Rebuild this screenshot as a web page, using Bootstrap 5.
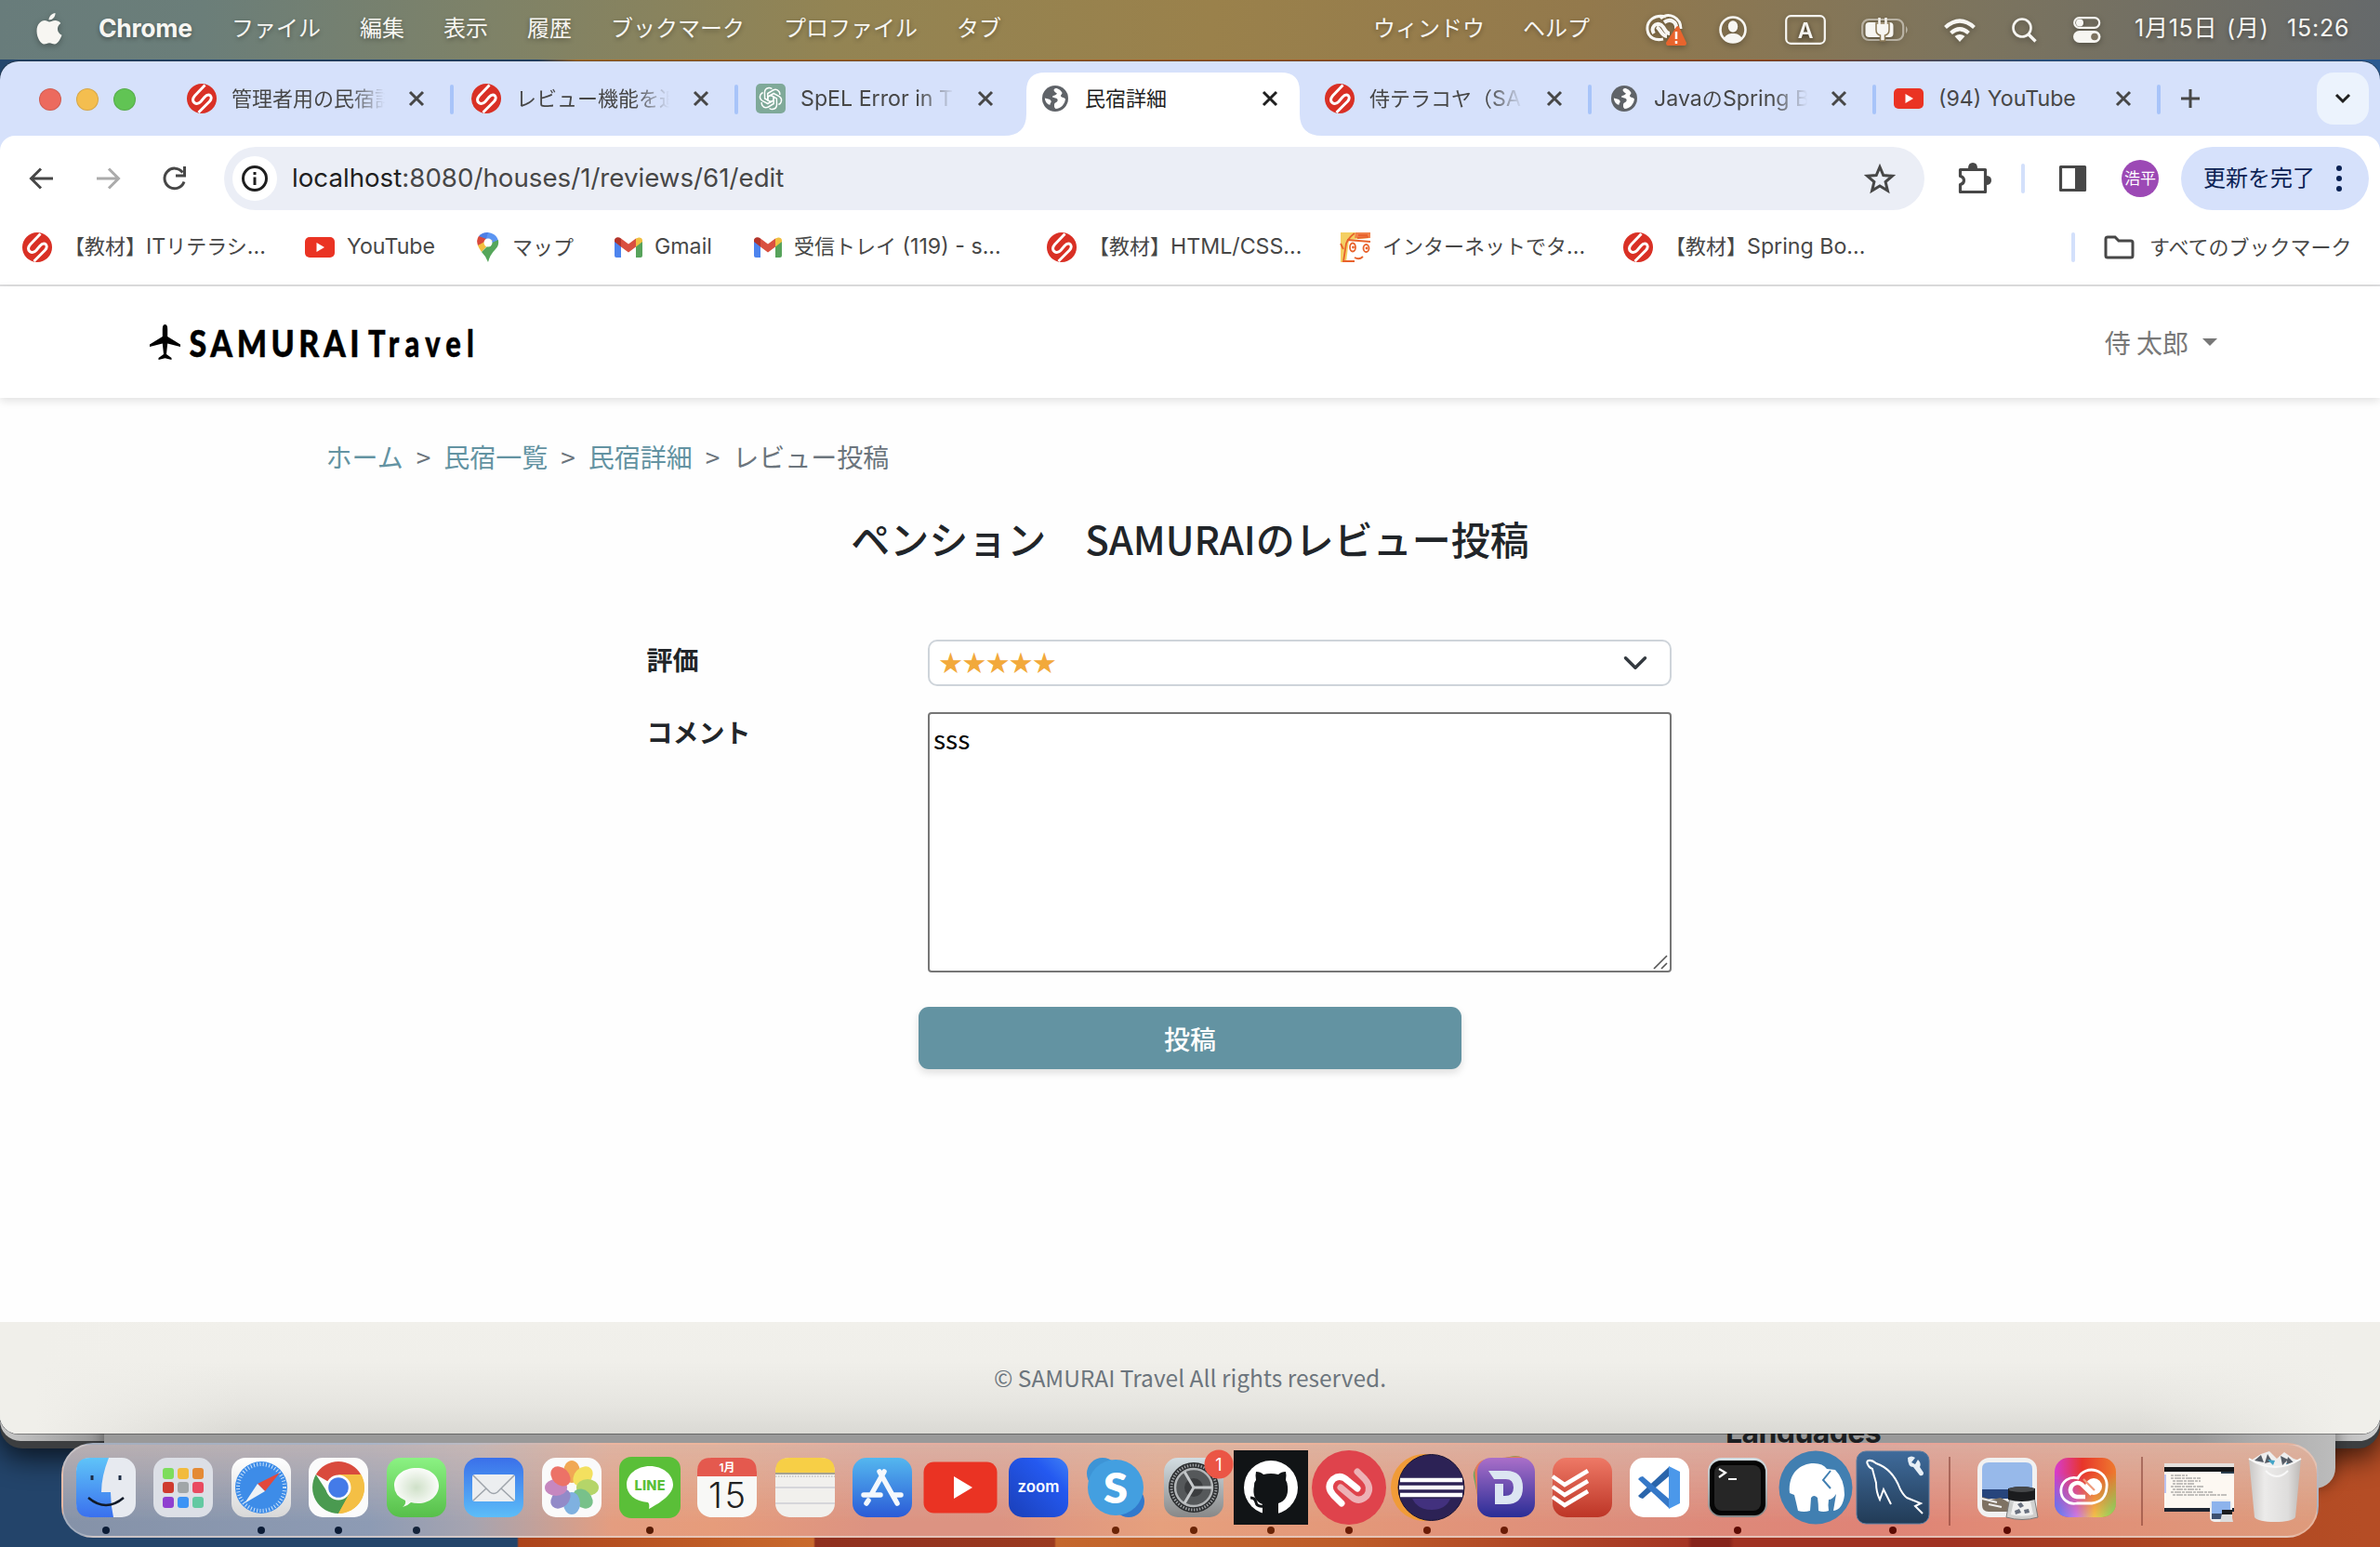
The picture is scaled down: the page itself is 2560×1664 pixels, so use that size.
<!DOCTYPE html>
<html lang="ja">
<head>
<meta charset="utf-8">
<title>民宿詳細</title>
<link href="https://cdn.jsdelivr.net/npm/bootstrap@5.3.0/dist/css/bootstrap.min.css" rel="stylesheet">
<style>
body{width:2560px;height:1664px;overflow:hidden;margin:0;font-family:Inter,"Noto Sans CJK JP",sans-serif;color:#474747;
 background:linear-gradient(90deg,#23466d 0 578px,#a86b25 620px,#9b4b20 1900px,#2a5a92 2200px) 0 0/2560px 120px no-repeat,
 linear-gradient(90deg,#23446a 0 556px,#ac431b 558px,#c96a2d 875px,#8f2f1e 877px,#9b3a20 1134px,#c4672d 1136px,#bd5c29 1450px,#a43524 1815px,#86241b 1820px 1860px,#a03222 1865px,#a03222 2100px,#ae4822 2350px,#b54d25 2540px);}
svg{display:block;overflow:visible}
.line-none{line-height:1;white-space:nowrap}
/* menu bar */
.menubar{height:64px;color:#f7f6f2;font-size:24px;line-height:1;padding-bottom:3px;text-shadow:0 2px 5px rgba(0,0,0,.35);
 background:linear-gradient(95deg,#687c7b 0,#6b7e79 220px,#7e8268 520px,#938453 900px,#9a814b 1300px,#93794c 1700px,#7c745e 2120px,#65696b 2560px)}
.menu-left{display:grid;grid-template-columns:106px 143px 138px 90px 90px 90px 186px 186px 448px 161px 90px;white-space:nowrap;align-items:center}
.menu-right{display:grid;grid-template-columns:79px 71px 82px 89px 73px 66px 66px 264px;white-space:nowrap;align-items:center}
.menu-left .app-name{font-weight:700;font-size:26.5px;letter-spacing:-.3px}
.menubar svg{filter:drop-shadow(0 2px 3px rgba(0,0,0,.3))}
.menu-right svg{margin-top:3px}
.clock-text{letter-spacing:.75px;font-size:25px;word-spacing:2px}
/* browser window */
.browser{margin-top:2px;height:1476px;border-radius:20px;background:#d6e1fb;overflow:hidden;box-shadow:0 0 0 1px rgba(30,30,30,.4)}
.tabstrip{height:80px;display:grid;grid-template-columns:180px repeat(7,306px) 170px 56px}
.lights{padding-left:42px;gap:16px;padding-top:2px}
.lights span{width:24px;height:24px;border-radius:50%;border:1px solid rgba(0,0,0,.12)}
.btab{padding:0 21px 4px 21px;font-size:22px;line-height:1;white-space:nowrap;position:relative;margin-top:4px}
.ltn{font-size:23.2px}
.btab>svg{flex:none;width:32px;height:32px}
.btab .ttl{width:167px;margin-left:16px;line-height:32px;overflow:hidden;-webkit-mask-image:linear-gradient(90deg,#000 76%,transparent 99%)}
.btab .ttl.whole{-webkit-mask-image:none}
.btab .cls{width:18px;height:18px;margin-left:23px}
.btab.divided::after{content:"";position:absolute;right:-2px;top:21px;width:4px;height:32px;border-radius:2px;background:#a8c4f9}
.btab.chosen{color:#1f1f1f}
.chosen-shape{position:absolute;left:-18px;top:8px;width:342px!important;height:68px!important}
.btab.chosen>*{position:relative}
.btab.chosen>.chosen-shape{position:absolute}
.tab-list{width:56px;height:56px;border-radius:18px;background:#ecf3fd;margin-top:12px}
.chrome-body{background:#fff;border-radius:16px 16px 0 0}
.toolbar2{height:92px;display:grid;grid-template-columns:241px 1829px 87px 42px 81px 66px 202px;align-items:center}
.toolbar2 .avatar-dot{margin-left:2px}
.nav-icons{display:grid;grid-template-columns:71px 73px 60px;padding-left:29px}
.omnibox{height:68px;border-radius:34px;background:#ebeef6;padding-left:9px;padding-right:31px}
.omni-info{width:48px;height:48px;border-radius:50%;background:#fff}
.addr{font-size:27.7px;line-height:1;margin-left:16px;color:#474747}
.addr b{font-weight:400;color:#1f1f1f}
.avatar-dot{width:40px;height:40px;border-radius:50%;background:#9c49b5;color:#fff;font-size:17px}
.update-btn{height:68px;border-radius:34px;background:#d6e1fb;color:#0b2254;font-size:24px;padding-left:24px;padding-right:29px}
.bmk-row{height:56px;padding-bottom:12px;border-bottom:2px solid #dfdfe0;box-sizing:content-box;display:grid;
 grid-template-columns:304px 184px 149px 150px 315px 316px 304px 506px 332px;font-size:22px}
.bmk{padding-left:24px;line-height:1;white-space:nowrap;gap:13px}
.bmk svg{flex:none}
/* site */
.site{font-family:"Noto Sans CJK JP",sans-serif;font-size:28px;background:#fefefe;color:#212529;height:1234px;line-height:1.5}
.site-nav{height:120px;padding:0 175px 0 160px;background:#fff;box-shadow:0 3px 9px rgba(0,0,0,.12);position:relative}
.site-user{color:#787878;gap:15px;line-height:1}
.site-user i{border-top:8px solid #777;border-left:8px solid transparent;border-right:8px solid transparent}
.site-main{height:994px;padding-top:42px}
.crumbs{margin:0 0 0 350.5px;--bs-breadcrumb-item-padding-x:14px;--bs-breadcrumb-divider-color:#6c757d;--bs-breadcrumb-item-active-color:#6c757d;font-size:28px;line-height:42px}
.crumbs a{color:#6393a2;text-decoration:none}
.site-title{font-size:42px;font-weight:500;line-height:50px;margin:42px 0 0;white-space:pre}
.form-area{margin:84px 762px 0 695.500px}
.form-area label{width:302.500px;font-weight:600;line-height:42px}
.rate-select{width:800px;height:50px;border:2px solid #ced4da;border-radius:10px;padding:0 60px 3px 10px;font-size:25.2px;line-height:43px;color:#f2a93b;background-size:28px 28px;background-position:right 23px center;font-family:"Noto Sans CJK JP",sans-serif}
.comment-box{width:800px;height:280px;border:2px solid #767676;border-radius:4px;padding:5px 4px;line-height:42px;resize:none;display:block;color:#000;background:#fff}
.grip{position:absolute;right:4px;bottom:3px}
.send-btn{width:584px;height:67px;border-radius:11px;background:#6393a2;color:#fff;border:0;font-size:28px;font-weight:500;line-height:69px;padding:0;margin:37px auto 0;display:block;box-shadow:0 4px 8px rgba(0,0,0,.13)}
.site-footer{height:120px;padding-top:1px;background:linear-gradient(180deg,#f1f0eb 0,#f0efea 35%,#e6e5e0 75%,#dad9d4);color:#6c757d;font-size:24.5px;line-height:1;position:relative}
.site-footer::before,.site-footer::after{content:"";position:absolute;top:0;bottom:0;width:260px}
.site-footer::before{left:0;background:linear-gradient(90deg,#f0efea 15%,rgba(240,239,234,0))}
.site-footer::after{right:0;background:linear-gradient(270deg,#f0efea 15%,rgba(240,239,234,0))}
/* windows stacked behind */
.behind{position:absolute;overflow:hidden;z-index:-1}
.behind-a{left:0;top:1480px;width:2560px;height:78px;background:#3c3e40;border-radius:0 0 24px 24px;box-shadow:0 10px 30px rgba(0,0,0,.7)}
.behind-b{left:0;top:1480px;width:2560px;height:70px;background:linear-gradient(90deg,#c9c9c9,#8f8f8f 120px,#999 2440px,#d0d0d0);border-radius:0 0 22px 22px}
.behind-c{left:112px;top:1480px;width:2400px;height:121px;background:linear-gradient(90deg,#999 0 2250px,#aaa 2310px,#bcbcbc);border-radius:0 0 22px 22px;box-shadow:0 0 16px rgba(0,0,0,.4)}
.behind-c strong{display:block;padding:41px 0 0 1744px;font-size:32px;line-height:40px;color:#1c1e21;letter-spacing:-.6px}
/* dock */
.dock{position:absolute;left:66px;top:1552px;width:2428px;height:102px;border-radius:34px;border:2px solid rgba(255,255,255,.25);
 display:grid;grid-template-columns:repeat(24,83.6px) 39px 84px 84px 38px 82px 84px;padding-left:3.500px;
 background:linear-gradient(180deg,rgba(218,194,184,.6),rgba(225,170,145,0) 85%),linear-gradient(90deg,#8592a8 0,#8d9bb4 330px,#a6a4b0 440px,#e49d80 590px,#e69c7b 700px,#dc9382 870px,#dc9382 1010px,#e6a07d 1180px,#e39779 1400px,#dd8c7b 1700px,#df8376 1950px,#e18d76 2120px,#de9b7c 2428px)}
.dock::before{content:"";position:absolute;inset:0;border-radius:32px;background:linear-gradient(90deg,rgba(165,180,205,.55),rgba(165,180,205,.4) 330px,transparent 480px);z-index:-1}
.dock svg{height:102px;width:84px;margin-top:-2px}
.dock .rule2{width:2px;height:74px;background:rgba(120,50,40,.5);margin:13px auto 0}
.ui text{font-family:Inter,"Noto Sans CJK JP",sans-serif}
</style>
<script src="https://cdn.jsdelivr.net/npm/bootstrap@5.3.0/dist/js/bootstrap.bundle.min.js"></script>
</head>
<body class="ui">
<svg width="0" height="0" class="position-absolute">
 <defs>
  <symbol id="sam" viewBox="0 0 32 32"><circle cx="16" cy="16" r="16" fill="#d93025"/><path d="M19.5 1.5 8.5 13Q4.800 17.500 8 20.500Q11.500 23 15 19.200L19 14.500Q22.500 10.500 25.300 12.800Q27.500 15.500 24.500 19L12.500 31" fill="none" stroke="#fff" stroke-width="2.900"/></symbol>
  <symbol id="globe" viewBox="0 0 32 32"><circle cx="16" cy="16" r="14" fill="#5f6368"/><path d="M16.500 5c-4 1-1 4.500 1.500 5.500-2 3-5 1.500-5 4 3 1 6.500 1 5.500 4-1 2-3.500 1.500-3.500 4.500-.3 2 .5 3 1.500 4 6-.5 9.800-5 10.500-10.500-1.500-2-3-1-4.500-2.500-1.500-1.300 1-2.500 1-4C22.500 7.500 19 4.800 16.500 5zM4.800 15.500c2.500 1 5.500.5 6.700 3 .8 2-1.500 2.500-1 4.500C7 22 5 19 4.800 15.500z" fill="#fff"/></symbol>
  <symbol id="yt" viewBox="0 0 32 32"><rect y="5" width="32" height="22" rx="5" fill="#ea3323"/><path d="M12.500 11v10l8.500-5z" fill="#fff"/></symbol>
  <symbol id="gm" viewBox="0 0 30 22"><path d="M0 3v17q0 2 2 2h5V9z" fill="#4d84ee"/><path d="M30 3v17q0 2-2 2h-5V9z" fill="#57a35b"/><path d="M23 1.500v9l7-5.500V3q-.5-3-4-2.500z" fill="#f1bf42"/><path d="M0 5l7 5.500v-9Q5 0 3 .3 0 1 0 3.500z" fill="#b3342a"/><path d="M7 1.500v9l8 6 8-6v-9l-8 6z" fill="#d95040"/></symbol>
  <symbol id="x" viewBox="0 0 18 18"><path d="M2 2l14 14M16 2 2 16" stroke="currentColor" stroke-width="3" fill="none"/></symbol>
  <linearGradient id="gFind" x2="0" y2="1"><stop stop-color="#5fc4f8"/><stop offset="1" stop-color="#3a70ee"/></linearGradient>
  <linearGradient id="gWhite" x2="0" y2="1"><stop stop-color="#fff"/><stop offset="1" stop-color="#d8d8d8"/></linearGradient>
  <linearGradient id="gGreen" x2="0" y2="1"><stop stop-color="#8bf283"/><stop offset="1" stop-color="#57bf4a"/></linearGradient>
  <linearGradient id="gMail" x2="0" y2="1"><stop stop-color="#3a70ea"/><stop offset="1" stop-color="#5cbdf8"/></linearGradient>
  <linearGradient id="gStore" x2="0" y2="1"><stop stop-color="#54b7ef"/><stop offset="1" stop-color="#2b5bd7"/></linearGradient>
  <linearGradient id="gZoom" x1="1" x2="0" y2="1"><stop stop-color="#3f80f5"/><stop offset=".3" stop-color="#2459f0"/><stop offset="1" stop-color="#1a3fb8"/></linearGradient>
  <linearGradient id="gGray" x2="0" y2="1"><stop stop-color="#d3dee3"/><stop offset="1" stop-color="#888"/></linearGradient>
  <linearGradient id="gDash" x2="0" y2="1"><stop stop-color="#aa6fc9"/><stop offset="1" stop-color="#2a2d96"/></linearGradient>
  <linearGradient id="gTodo" x2="0" y2="1"><stop stop-color="#ee7966"/><stop offset="1" stop-color="#bd3526"/></linearGradient>
  <linearGradient id="gSql" x2="0" y2="1"><stop stop-color="#3f6b9b"/><stop offset="1" stop-color="#223b56"/></linearGradient>
  <linearGradient id="gCc" x2="1" y2="0"><stop stop-color="#d63bd0"/><stop offset=".45" stop-color="#e8352a"/><stop offset="1" stop-color="#ee7a2e"/></linearGradient>
  <linearGradient id="gCc2" x2="1" y2="0"><stop stop-color="#4583f5"/><stop offset=".35" stop-color="#c879e8"/><stop offset=".65" stop-color="#f2c14a"/><stop offset="1" stop-color="#74dc66"/></linearGradient>
  <linearGradient id="gFade" x2="0" y2="1"><stop offset=".25" stop-color="#000"/><stop offset="1" stop-color="#fff"/></linearGradient>
  <mask id="mCc" maskContentUnits="userSpaceOnUse"><rect x="-33" y="-32" width="66" height="64" fill="url(#gFade)"/></mask>
  <linearGradient id="gTrash" x2="1" y2="0"><stop stop-color="#c9c7c5"/><stop offset=".3" stop-color="#ecebea"/><stop offset=".75" stop-color="#dedddc"/><stop offset="1" stop-color="#bdb9b6"/></linearGradient>
  <radialGradient id="gBub"><stop stop-color="#cfe0c8"/><stop offset="1" stop-color="#fafcf9"/></radialGradient>
 </defs>
</svg>

<div class="menubar d-flex justify-content-between">
 <div class="menu-left">
  <svg width="28" height="34" viewBox="0 0 28 34" style="margin-left:39px"><path d="M14 9.500c2 0 4-1.900 7-1.500 2.500.3 4.300 1.500 5.300 3-5.200 3.500-4 10.500 1.200 12.700C26 28 23 33.500 19.800 33.500c-2.200 0-3.200-1.300-5.600-1.300-2.500 0-3.600 1.300-5.700 1.300C5 33.500.5 26.500.5 19.500.5 12 5 8 9 8c2.300 0 4 1.500 5 1.500zM13.500 7.500C13.500 3.500 17 .2 20.500 0c.3 4-3 7.500-7 7.500z" fill="#f7f6f2"/></svg>
  <span class="app-name">Chrome</span><span>ファイル</span><span>編集</span><span>表示</span><span>履歴</span><span>ブックマーク</span><span>プロファイル</span><span>タブ</span><span>ウィンドウ</span><span>ヘルプ</span>
 </div>
 <div class="menu-right">
  <svg width="44" height="34" viewBox="0 0 44 34"><g fill="none" stroke="#f7f6f2"><path d="M22 3C10 0 1 7 2 17c1 9 9 12 17 10M16 5C25-3 38 4 38 16" stroke-width="3"/><path d="M9 21c-4-6 2-13 8-9 4 3 4 9 9 9M23 24c-6 0-7-8-11-10M20 9c7-5 14 0 13 7" stroke-width="4"/></g><path d="M33 14q2-2 3 0l8 17q0 3-2 3H24q-2 0-2-3z" fill="#e8642d"/><path d="M33 19v8M33 29v3" stroke="#fff" stroke-width="2.500"/></svg>
  <svg width="30" height="30" viewBox="0 0 30 30"><circle cx="15" cy="15" r="13.500" fill="none" stroke="#f7f6f2" stroke-width="2.600"/><ellipse cx="15" cy="11.500" rx="5.200" ry="6.200" fill="#f7f6f2"/><path d="M5 25c2-5 6-6 10-6s8 1 10 6c-5 5-15 5-20 0z" fill="#f7f6f2"/></svg>
  <svg width="44" height="32" viewBox="0 0 44 32"><rect x="1.200" y="1.200" width="41.600" height="29.600" rx="5" fill="none" stroke="#f7f6f2" stroke-width="2.200"/><text x="22" y="24.500" font-size="23" font-weight="600" text-anchor="middle" fill="#f7f6f2">A</text></svg>
  <svg width="52" height="26" viewBox="0 0 52 26"><rect x="1.200" y="2" width="44" height="22" rx="7" fill="none" stroke="#f7f6f2" stroke-opacity=".5" stroke-width="2.200"/><path d="M48 9q3.500 4 0 8z" fill="#f7f6f2" opacity=".5"/><rect x="4.500" y="5" width="30" height="16" rx="4" fill="#f7f6f2"/><path d="M16 6h14v7q0 5-4.500 6v6h-5v-6Q16 18 16 13zM19 0v7M27 0v7" fill="#f7f6f2" stroke="#8a7855" stroke-width="1.500"/><path d="M19.500 0v7M26.500 0v7" stroke="#f7f6f2" stroke-width="2.500"/></svg>
  <svg width="34" height="25" viewBox="0 0 34 25"><g fill="none" stroke="#f7f6f2" stroke-width="4.200"><path d="M1.500 9.500Q17-4.500 32.500 9.500M7.500 15.500q9.500-8.500 19 0"/></g><path d="M11.500 19q5.500-4 11 0L17 25z" fill="#f7f6f2"/></svg>
  <svg width="27" height="27" viewBox="0 0 27 27"><circle cx="11" cy="11" r="9.500" fill="none" stroke="#f7f6f2" stroke-width="2.600"/><path d="M18 18l7.500 7.500" stroke="#f7f6f2" stroke-width="3.300"/></svg>
  <svg width="30" height="28" viewBox="0 0 30 28"><rect x="1.200" y="1.200" width="27" height="10.600" rx="5.300" fill="none" stroke="#f7f6f2" stroke-width="2.200"/><circle cx="7" cy="6.500" r="4" fill="#f7f6f2"/><rect y="15" width="29.500" height="13" rx="6.500" fill="#f7f6f2"/><circle cx="23" cy="21.500" r="3.800" fill="#7c7260"/></svg>
  <span class="clock-text">1月15日 (月)&nbsp; 15:26</span>
 </div>
</div>

<div class="browser">
 <div class="tabstrip">
  <div class="lights d-flex align-items-center"><span style="background:#ec6a5e"></span><span style="background:#f4be4f"></span><span style="background:#61c454"></span></div>
  <div class="btab divided d-flex align-items-center"><svg><use href="#sam"/></svg><span class="ttl">管理者用の民宿詳細</span><svg class="cls"><use href="#x"/></svg></div>
  <div class="btab divided d-flex align-items-center"><svg><use href="#sam"/></svg><span class="ttl">レビュー機能を追加</span><svg class="cls"><use href="#x"/></svg></div>
  <div class="btab d-flex align-items-center"><svg viewBox="0 0 32 32"><rect width="32" height="32" rx="5" fill="#7fa999"/><g fill="none" stroke="#fff" stroke-width="1.500"><path id="pet" d="M16 12.300 19.200 14.200V21.500L13.500 25Q9.500 27 7 23.500Q6 22 6.200 20"/><use href="#pet" transform="rotate(60 16 16)"/><use href="#pet" transform="rotate(120 16 16)"/><use href="#pet" transform="rotate(180 16 16)"/><use href="#pet" transform="rotate(240 16 16)"/><use href="#pet" transform="rotate(300 16 16)"/></g></svg><span class="ttl ltn">SpEL Error in Th</span><svg class="cls"><use href="#x"/></svg></div>
  <div class="btab chosen d-flex align-items-center"><svg class="chosen-shape" viewBox="0 0 342 68"><path d="M0 68Q24 68 24 44V20Q24 0 44 0H298Q318 0 318 20V44Q318 68 342 68z" fill="#fff"/></svg><svg><use href="#globe"/></svg><span class="ttl whole">民宿詳細</span><svg class="cls"><use href="#x"/></svg></div>
  <div class="btab divided d-flex align-items-center"><svg><use href="#sam"/></svg><span class="ttl">侍テラコヤ（<span class="ltn">SAM</span></span><svg class="cls"><use href="#x"/></svg></div>
  <div class="btab divided d-flex align-items-center"><svg><use href="#globe"/></svg><span class="ttl"><span class="ltn">Java</span>の<span class="ltn">Spring B</span></span><svg class="cls"><use href="#x"/></svg></div>
  <div class="btab divided d-flex align-items-center"><svg><use href="#yt"/></svg><span class="ttl whole ltn">(94) YouTube</span><svg class="cls"><use href="#x"/></svg></div>
  <div class="d-flex align-items-center"><svg width="20" height="20" viewBox="0 0 20 20" class="ms-4"><path d="M10 0v20M0 10h20" stroke="#474747" stroke-width="3"/></svg></div>
  <div class="tab-list d-flex align-items-center justify-content-center"><svg width="16" height="10" viewBox="0 0 16 10"><path d="M1 1l7 7 7-7" fill="none" stroke="#1f1f1f" stroke-width="3"/></svg></div>
 </div>

 <div class="chrome-body">
  <div class="toolbar2">
   <div class="nav-icons align-items-center">
    <svg width="32" height="24" viewBox="0 0 32 24"><path d="M15 1.500 4.500 12 15 22.500M5 12h23" fill="none" stroke="#474747" stroke-width="3"/></svg>
    <svg width="32" height="24" viewBox="0 0 32 24"><path d="M17 1.500 27.500 12 17 22.500M27 12H4" fill="none" stroke="#ababab" stroke-width="3"/></svg>
    <svg width="28" height="26" viewBox="0 0 28 26"><path d="M24 16.500A10.800 10.800 0 1 1 22.500 6.500M24.500 0v10H15" transform="translate(1 0)" fill="none" stroke="#474747" stroke-width="3"/></svg>
   </div>
   <div class="omnibox d-flex align-items-center">
    <span class="omni-info d-flex align-items-center justify-content-center"><svg width="28" height="28" viewBox="0 0 28 28"><circle cx="14" cy="14" r="12.500" fill="none" stroke="#1f1f1f" stroke-width="3"/><path d="M14 12.500V21M14 7v3" stroke="#1f1f1f" stroke-width="3"/></svg></span>
    <span class="addr"><b>localhost</b>:8080/houses/1/reviews/61/edit</span>
    <svg class="ms-auto" width="34" height="32" viewBox="0 0 34 32"><path d="M17 3.500l3.800 9 9.700.8-7.400 6.300 2.300 9.500L17 24l-8.400 5.100 2.300-9.500-7.400-6.300 9.700-.8z" fill="none" stroke="#474747" stroke-width="3"/></svg>
   </div>
   <svg class="ms-auto me-3" width="36" height="36" viewBox="0 0 36 36"><path d="M3.500 8.500h27v24h-27v-8q4-1 4-4.500t-4-4.500z" fill="none" stroke="#474747" stroke-width="3.200" stroke-linejoin="round"/><path d="M12 7q0-6 5-6t5 6zM31 15q6 0 6 5t-6 5z" fill="#474747"/></svg>
   <svg width="4" height="32" style="margin-left:17px"><rect width="4" height="32" rx="2" fill="#d3e0fb"/></svg>
   <svg width="30" height="30" viewBox="0 0 30 30" class="ms-3"><path d="M1.500 2.500h26v25h-26z" fill="none" stroke="#474747" stroke-width="3.200" stroke-linejoin="round"/><path d="M17 2h11v26H17z" fill="#474747"/></svg>
   <div class="avatar-dot line-none d-flex align-items-center justify-content-center">浩平</div>
   <div class="update-btn line-none d-flex align-items-center justify-content-between">更新を完了<svg width="6" height="28" viewBox="0 0 6 28"><g fill="#0b2254"><circle cx="3" cy="3" r="3"/><circle cx="3" cy="14" r="3"/><circle cx="3" cy="25" r="3"/></g></svg></div>
  </div>
  <div class="bmk-row">
   <div class="bmk d-flex align-items-center"><svg width="32" height="32"><use href="#sam"/></svg><span>【教材】<span class="ltn">IT</span>リテラシ<span class="ltn">...</span></span></div>
   <div class="bmk d-flex align-items-center"><svg width="32" height="32"><use href="#yt"/></svg><span class="ltn">YouTube</span></div>
   <div class="bmk d-flex align-items-center"><svg width="26" height="32" viewBox="0 0 26 32"><path d="M3 4Q7-.5 13 0l2 5-7 7z" fill="#4d7fe6"/><path d="M13 0q9 1 11 9l-7 3-6-5z" fill="#5b95f2"/><path d="M3 4q-3 4-1 10l5-1 4-6z" fill="#d9493b"/><path d="M2 14q1 3 4 7L18 8l-7 1z" fill="#f3bf3f"/><path d="M24 8q1 6-3 10-6 6-8 14-2-6-7-11l9-9z" fill="#55a65a"/><circle cx="13" cy="11" r="4.500" fill="#fff"/></svg><span>マップ</span></div>
   <div class="bmk d-flex align-items-center"><svg width="30" height="22"><use href="#gm"/></svg><span class="ltn">Gmail</span></div>
   <div class="bmk d-flex align-items-center"><svg width="30" height="22"><use href="#gm"/></svg><span>受信トレイ<span class="ltn"> (119) - s...</span></span></div>
   <div class="bmk d-flex align-items-center"><svg width="32" height="32"><use href="#sam"/></svg><span>【教材】<span class="ltn">HTML/CSS...</span></span></div>
   <div class="bmk d-flex align-items-center"><svg width="32" height="32" viewBox="0 0 32 32"><path d="M0 0h32v6L9 8 6 32H0z" fill="#f4cf62"/><path d="M16 0h16v6H15z" fill="#f0824a"/><g fill="none" stroke="#e8622c" stroke-width="1.800"><path d="M15 1Q8 6 6 12L3 31h12M7 8l25 2M0 12l3 6M19 3l10 0M18 6l12-1"/><ellipse cx="13" cy="16" rx="3" ry="4.500"/><ellipse cx="27.500" cy="17" rx="3" ry="4"/><path d="M15 27q5 3 9-1"/></g><circle cx="13.500" cy="16" r="1.400" fill="#e8622c"/><circle cx="28" cy="17" r="1.400" fill="#e8622c"/></svg><span>インターネットでタ<span class="ltn">...</span></span></div>
   <div class="bmk d-flex align-items-center"><svg width="32" height="32"><use href="#sam"/></svg><span>【教材】<span class="ltn">Spring Bo...</span></span></div>
   <div class="d-flex align-items-center line-none"><svg width="4" height="32" style="margin-right:31px"><rect width="4" height="32" rx="2" fill="#d3e0fb"/></svg><svg width="33" height="26" viewBox="0 0 33 26"><path d="M2 4q0-2 2-2h8l4 4h13q2 0 2 2v14q0 2-2 2H4q-2 0-2-2z" fill="none" stroke="#474747" stroke-width="3"/></svg><span class="ms-3">すべてのブックマーク</span></div>
  </div>

  <div class="site">
   <nav class="site-nav d-flex align-items-center justify-content-between">
    <svg width="350" height="40" viewBox="0 0 350 40"><path d="M17.500 1q2.700 0 2.700 5v8L34 22.500V25l-13.800-3.500L19 33l5.500 4v2l-7-1.800-7 1.800v-2l5.500-4-1.200-11.500L1 25v-2.500L14.800 14V6q0-5 2.700-5z" fill="#000"/><g font-size="39.500" font-weight="900" stroke="#000" stroke-width=".5"><text transform="translate(43.500 36) scale(.86 1)" textLength="213" style="font-family:Lato,sans-serif">SAMURAI</text><text transform="translate(236 36) scale(.78 1)" textLength="146" style="font-family:Lato,sans-serif">Travel</text></g></svg>
    <div class="site-user d-flex align-items-center"><span>侍 太郎</span><i></i></div>
   </nav>
   <main class="site-main">
    <ol class="breadcrumb crumbs" style="--bs-breadcrumb-divider:'>'">
     <li class="breadcrumb-item"><a href="#">ホーム</a></li><li class="breadcrumb-item"><a href="#">民宿一覧</a></li><li class="breadcrumb-item"><a href="#">民宿詳細</a></li><li class="breadcrumb-item active">レビュー投稿</li>
    </ol>
    <h1 class="site-title text-center">ペンション　SAMURAIのレビュー投稿</h1>
    <form class="form-area">
     <div class="d-flex"><label>評価</label><select class="form-select rate-select"><option>★★★★★</option></select></div>
     <div class="d-flex" style="margin-top:28px"><label>コメント</label><div class="position-relative"><textarea class="comment-box">sss</textarea><svg class="grip" width="16" height="16" viewBox="0 0 16 16"><path d="M1 15 15 1M9 15l6-6" stroke="#555" stroke-width="1.600"/></svg></div></div>
    </form>
    <button class="btn send-btn">投稿</button>
   </main>
   <footer class="site-footer d-flex align-items-center justify-content-center">© SAMURAI Travel All rights reserved.</footer>
  </div>
 </div>
</div>

<div class="behind behind-a"></div><div class="behind behind-b"></div><div class="behind behind-c"><strong>Languages</strong></div>

<div class="dock">
 <svg viewBox="-42 -48 84 102"><rect x="-32" y="-32" width="64" height="64" rx="15" fill="#e7eaf0"/><path d="M3-32Q-5-12-5 5H5q0 14 3 27H-17q-15 0-15-15V-17q0-15 15-15z" fill="url(#gFind)"/><path d="M-15-13v5M15-13v5" stroke="#1d2c45" stroke-width="3"/><path d="M-19 11q19 16 38 0" fill="none" stroke="#111a28" stroke-width="2.500"/><circle cy="46" r="4" fill="#0c1c36"/></svg>
 <svg viewBox="-42 -48 84 102"><rect x="-32" y="-32" width="64" height="64" rx="15" fill="#dcdfe6"/><g><rect x="-22" y="-21" width="12" height="12" rx="3" fill="#7ddd5c"/><rect x="-6" y="-21" width="12" height="12" rx="3" fill="#f2bb3d"/><rect x="10" y="-21" width="12" height="12" rx="3" fill="#e48a35"/><rect x="-22" y="-6" width="12" height="12" rx="3" fill="#cf3a2e"/><rect x="-6" y="-6" width="12" height="12" rx="3" fill="#a0a6a8"/><rect x="10" y="-6" width="12" height="12" rx="3" fill="#e94a60"/><rect x="-22" y="10" width="12" height="12" rx="3" fill="#8f3fd0"/><rect x="-6" y="10" width="12" height="12" rx="3" fill="#3c93f5"/><rect x="10" y="10" width="12" height="12" rx="3" fill="#63c9a2"/></g></svg>
 <svg viewBox="-42 -48 84 102"><rect x="-32" y="-32" width="64" height="64" rx="15" fill="url(#gWhite)"/><circle r="28" fill="#3d8ce8"/><circle r="25" fill="none" stroke="#cfe4fa" stroke-width="4" stroke-dasharray="1 2.300"/><path d="M20-16-4-4 4 4z" fill="#e2493c"/><path d="M-18 17-4-4 4 4z" fill="#eef2f6"/><circle cy="46" r="4" fill="#0c1c36"/></svg>
 <svg viewBox="-42 -48 84 102"><rect x="-32" y="-32" width="64" height="64" rx="15" fill="#fbfbfb"/><path d="M0 0-24.200-14A28 28 0 0 1 24.200-14z" fill="#d94a3d"/><path d="M0 0 24.200-14A28 28 0 0 1 0 28z" fill="#f4bf45"/><path d="M0 28A28 28 0 0 1-24.200-14L-10 8 0 12 12 6z" fill="#4a9a50"/><path d="M0-14H24.200A28 28 0 0 1 0 28L12 7z" fill="#f4bf45"/><circle r="13.500" fill="#fff"/><circle r="10.800" fill="#447be8"/><circle cy="46" r="4" fill="#0c1c36"/></svg>
 <svg viewBox="-42 -48 84 102"><rect x="-32" y="-32" width="64" height="64" rx="15" fill="url(#gGreen)"/><path d="M0-21c14 0 24 8 24 19S14 17 2 17q-5 0-8-1-4 4-9 5 4-3 3-7-12-5-12-16C-24-13-14-21 0-21z" fill="url(#gBub)"/><circle cy="46" r="4" fill="#14233a"/></svg>
 <svg viewBox="-42 -48 84 102"><rect x="-32" y="-32" width="64" height="64" rx="15" fill="url(#gMail)"/><rect x="-23" y="-14" width="46" height="29" rx="3" fill="#eceef0"/><path d="M-22-13-4 5q4 3 8 0L22-13M-22 14-8 1M22 14 8 1" fill="none" stroke="#9ea4ab" stroke-width="1.500"/></svg>
 <svg viewBox="-42 -48 84 102"><rect x="-32" y="-32" width="64" height="64" rx="15" fill="#fafafa"/><g opacity=".85"><ellipse cy="-17" rx="9" ry="12" fill="#f09a38"/><ellipse cy="-17" rx="9" ry="12" fill="#f2dc45" transform="rotate(45)"/><ellipse cy="-17" rx="9" ry="12" fill="#a9cf50" transform="rotate(90)"/><ellipse cy="-17" rx="9" ry="12" fill="#62b877" transform="rotate(135)"/><ellipse cy="-17" rx="9" ry="12" fill="#6aa5dc" transform="rotate(180)"/><ellipse cy="-17" rx="9" ry="12" fill="#8077c0" transform="rotate(225)"/><ellipse cy="-17" rx="9" ry="12" fill="#bd74b5" transform="rotate(270)"/><ellipse cy="-17" rx="9" ry="12" fill="#ea5b4e" transform="rotate(315)"/></g></svg>
 <svg viewBox="-42 -48 84 102"><rect x="-33" y="-33" width="66" height="66" rx="13" fill="#5abf38"/><path d="M0-23c14 0 25 9 25 20 0 10-13 19-26 26q1-5-1-7C-16 15-25 7-25-3-25-14-14-23 0-23z" fill="#fff"/><text y="3" font-size="14.500" font-weight="800" text-anchor="middle" textLength="33" fill="#5abf38">LINE</text><circle cy="46" r="4" fill="#571c05"/></svg>
 <svg viewBox="-42 -48 84 102"><rect x="-32" y="-32" width="64" height="64" rx="15" fill="#f8f8f6"/><path d="M-32-12v-5q0-15 15-15H17q15 0 15 15v5z" fill="#e4594e"/><text y="-17" font-size="12" font-weight="600" text-anchor="middle" fill="#fff">1月</text><text y="22" font-size="38" font-weight="300" text-anchor="middle" textLength="40" fill="#222">15</text></svg>
 <svg viewBox="-42 -48 84 102"><rect x="-32" y="-32" width="64" height="64" rx="15" fill="#f1f0ed"/><path d="M-32-16v-1q0-15 15-15H17q15 0 15 15v1z" fill="#f7cf46"/><path d="M-32-15h64" stroke="#8d8872" stroke-width="1.500"/><path d="M-32-12h64" stroke="#aaa" stroke-dasharray="1.500 1.500"/><path d="M-32 0h64M-32 17h64" stroke="#cdcdd3" stroke-width="1.500"/></svg>
 <svg viewBox="-42 -48 84 102"><rect x="-32" y="-32" width="64" height="64" rx="15" fill="url(#gStore)"/><path d="M2-17-11 6M-3-17 16 17M-20 8H-2M12 8H20M-15 14l-2 3" stroke="#f4f8fd" stroke-width="5.500" stroke-linecap="round"/></svg>
 <svg viewBox="-42 -48 84 102"><rect x="-39.500" y="-27.500" width="79" height="55" rx="11" fill="#ea3323"/><path d="M-7-12v24l20-12z" fill="#fff"/></svg>
 <svg viewBox="-42 -48 84 102"><rect x="-32" y="-32" width="64" height="64" rx="15" fill="url(#gZoom)"/><text y="5" font-size="17" font-weight="600" text-anchor="middle" textLength="45" lengthAdjust="spacingAndGlyphs" fill="#fff">zoom</text></svg>
 <svg viewBox="-42 -48 84 102"><circle cx="-14" cy="-15" r="17" fill="#3d94d6"/><circle cx="14" cy="15" r="17" fill="#3279cc"/><circle r="30" fill="#439fe0"/><text y="17" font-size="46" font-weight="800" text-anchor="middle" fill="#fff" textLength="26" lengthAdjust="spacingAndGlyphs" style="font-family:Lato,sans-serif">S</text><circle cy="46" r="4" fill="#6a2406"/></svg>
 <svg viewBox="-42 -48 84 102"><rect x="-32" y="-32" width="64" height="64" rx="15" fill="url(#gGray)"/><circle r="27" fill="#2b2d2f"/><circle r="24" fill="none" stroke="#9a9da0" stroke-width="3" stroke-dasharray="1.500 1.500"/><circle r="20" fill="#55585a" stroke="#b3b6b8" stroke-width="2.500"/><circle r="10" fill="#3b3d3f"/><path d="M0 0H20M0 0-10-17M0 0-10 17" stroke="#c5c8ca" stroke-width="3"/><circle cx="27" cy="-25" r="15.500" fill="#eb5545"/><text x="27" y="-18.500" font-size="18" text-anchor="middle" fill="#fff">1</text><circle cy="46" r="4" fill="#6a2406"/></svg>
 <svg viewBox="-42 -48 84 102"><rect x="-40" y="-40" width="80" height="80" fill="#111416"/><circle r="29" fill="#fff"/><path d="M-9 33V18C-17 15-20 8-18-2q0-4 2-6-1-5 0-9 5 0 8 3 8-2 16 0 3-3 8-3 1 4 0 9 2 3 2 7C19 9 15 15 8 17v16z" fill="#111416"/><path d="M-22 11q5 0 6 5t8 4" fill="none" stroke="#111416" stroke-width="3"/><circle cy="46" r="4" fill="#6a2406"/></svg>
 <svg viewBox="-42 -48 84 102"><circle r="40" fill="#df434c"/><path d="M9-17 17-9Q25 0 19 9 11 17 3 10L-9 0" fill="none" stroke="#edb1b5" stroke-width="7" stroke-linecap="round"/><path d="M-8 17-17 8Q-25-1-17-9-9-15-1-7L9 1" fill="none" stroke="#fff" stroke-width="7" stroke-linecap="round"/><circle cy="46" r="4" fill="#6a1c06"/></svg>
 <svg viewBox="-42 -48 84 102"><circle cx="-3" r="36" fill="#f09b38"/><circle cx="4.500" r="35.500" fill="#2c2255" stroke="#151233" stroke-width="1"/><path d="M-16 12h41Q20 24 5 24T-16 12z" fill="#42317e"/><path d="M-29-8H38M-30 0H39M-29 8H38" stroke="#fff" stroke-width="4.500"/><circle cy="46" r="4" fill="#6a1c06"/></svg>
 <svg viewBox="-42 -48 84 102"><rect x="-30" y="-31" width="60" height="60" rx="14" fill="#6aaa5e" transform="rotate(-12)"/><rect x="-30" y="-32" width="60" height="60" rx="14" fill="#e4795a" transform="rotate(-6)"/><rect x="-29" y="-32" width="62" height="64" rx="15" fill="url(#gDash)"/><path d="M-17-18H2Q20-18 20 0 20 18 2 18H-10V-4H-1V9Q10 10 10 0T0-9H-11z" fill="#dce6f2"/><circle cy="46" r="4" fill="#6a1c06"/></svg>
 <svg viewBox="-42 -48 84 102"><rect x="-32" y="-32" width="64" height="64" rx="15" fill="url(#gTodo)"/><path d="M-32-12-19-3 6-18M-32-1-19 8 6-7M-32 10-19 19 6 4" fill="none" stroke="#fff" stroke-width="4.500"/></svg>
 <svg viewBox="-42 -48 84 102"><rect x="-32" y="-32" width="64" height="64" rx="15" fill="#fff"/><path d="M10-22v10L-18 12q-3 0-5-3z" fill="#2a65ab"/><path d="M10 22V12L-18-12q-3 0-5 3z" fill="#3578c8"/><path d="M10-23 22-17V17L10 23z" fill="#4b98ea"/></svg>
 <svg viewBox="-42 -48 84 102"><rect x="-32" y="-32" width="64" height="64" rx="15" fill="url(#gGray)"/><rect x="-30" y="-29" width="60" height="59" rx="12" fill="#050505"/><rect x="-25" y="-24" width="50" height="49" rx="8" fill="#262626"/><path d="M-20-20l7 4-7 5M-10-9h9" fill="none" stroke="#fff" stroke-width="2.200"/><circle cy="46" r="4" fill="#5c0b03"/></svg>
 <svg viewBox="-42 -48 84 102"><circle r="39.500" fill="#417fb1"/><path d="M-28 6C-30-16-16-26-2-26q10 0 14 6l9 1q10 10 10 27-2 16-12 17l3-18q-4 6-8 6-1 6 0 12-6 2-11 0 0-7-1-14-4-4-7 0l-1 14q-7 2-13 0-2-9-4-17z" fill="#fff"/><path d="M16-18 8-8l8 9" fill="none" stroke="#417fb1" stroke-width="2"/></svg>
 <svg viewBox="-42 -48 84 102"><rect x="-39" y="-39" width="78" height="78" rx="10" fill="url(#gSql)" stroke="#5a7da1"/><path d="M-28-28q4-3 10 2Q0-20 8 2 12 9 15 11l15 6-6 3 8 8M-28-28q1 6 6 8 2 8 4 15 0 10 4 18l4-11 8 16" fill="none" stroke="#fff" stroke-width="2"/><path d="M16-32q4-3 8 0l-4 5 4 2 3-5q4 4 2 8l4 6q0 4-4 3l-7-9q-6 0-6-10z" fill="#e7eff6"/><circle cy="46" r="4" fill="#5c0b03"/></svg>
 <div class="rule2"></div>
 <svg viewBox="-42 -48 84 102"><rect x="-32" y="-32" width="64" height="64" rx="13" fill="#f1f1f1"/><path d="M-27-20q0-7 7-7h40q7 0 7 7V3h-54z" fill="#97b9ea"/><path d="M-27 2h54v10h-54z" fill="#27457c"/><path d="M-27 10l10 3 10-2 14 8v7h-27q-7 0-7-7z" fill="#7e7263"/><path d="M-27 12l16 4M-20 18l14 3" stroke="#eee" stroke-width="2"/><path d="M3 10h26l4 22q-17 5-34 0z" fill="#cfd1d0" opacity=".95" stroke="#777"/><path d="M7 15h18l3 14q-12 3-24 0z" fill="#f0f0ef"/><path d="M11 18l4-2 3 4-4 2zM8 25l5-2 2 4-6 2zM18 24l5-1 1 4-5 1z" fill="#68707e"/><path d="M1 1q14-4 29 0v12q-14 4-29 0z" fill="#1b1c1e"/><ellipse cx="15.500" cy="2" rx="14" ry="3" fill="#46484a"/><circle cy="46" r="4" fill="#5c0b03"/></svg>
 <svg viewBox="-42 -48 84 102"><rect x="-33" y="-32" width="66" height="64" rx="15" fill="url(#gCc)"/><g mask="url(#mCc)"><rect x="-33" y="-32" width="66" height="64" rx="15" fill="url(#gCc2)"/></g><path d="M7 17H-9A14 14 0 1 1-8-10A16.500 16.500 0 0 1 23 0Q22 15 7 17z" fill="none" stroke="#fff" stroke-width="2.800"/><circle cx="9" cy="-1" r="9" fill="#fff"/><path d="M0 10H-9A7.500 7.500 0 1 1-4-3.500L7 7" fill="none" stroke="#fff" stroke-width="4.500"/><path d="M-2-9 10 3" stroke="#ee9a7c" stroke-width="2.200"/></svg>
 <div class="rule2"></div>
 <svg viewBox="-42 -48 84 102"><rect x="-37" y="-26" width="75" height="52" fill="#fdf8f2"/><path d="M-37-26h75v4h-75z" fill="#e5e0dc"/><path d="M-37-22h75v5h-75z" fill="#15171a"/><path d="M24-17h14v2H24z" fill="#2d4050"/><path d="M-37 22h75v4h-75z" fill="#1d2430"/><path d="M-30-13h18M-30-10h32M-28-7h30M-28-4h24M-30-1h35M-28 2h30M-30 5h45M-28 8h58" stroke="#888" stroke-width="1" stroke-dasharray="3 1 7 1"/><path d="M-36-14V6" stroke="#7a8bea"/><rect x="12" y="13" width="24" height="24" rx="5" fill="#eee"/><path d="M14 15h20v13H14z" fill="#8db3ec"/><path d="M14 28h20v6H14z" fill="#3d5070"/><path d="M25 28h10l2 9H23z" fill="#ddd"/><path d="M25 24h11v5H25z" fill="#1b1c1e"/></svg>
 <svg viewBox="-42 -48 84 102"><path d="M-26-29-15-36-6-39 2-31 10-38 20-31 26-29 20-18h-40z" fill="#eee"/><path d="M-22-29l7-6 3 8zM-8-36l5 8-8 2zM6-34l8 4-6 6zM14-33l6 6-8 3z" fill="#555c66"/><path d="M-8-30l8 1-2 5zM12-26l6 2-4 3z" fill="#43a5c8"/><path d="M-28-31q28 18 56 0L22 32q-4 5-22 5t-22-5z" fill="url(#gTrash)"/><path d="M-28-31q28 18 56 0M-10-18q12 12 24 0" fill="none" stroke="#f8f8f8" stroke-width="2"/></svg>
</div>
</body>
</html>
